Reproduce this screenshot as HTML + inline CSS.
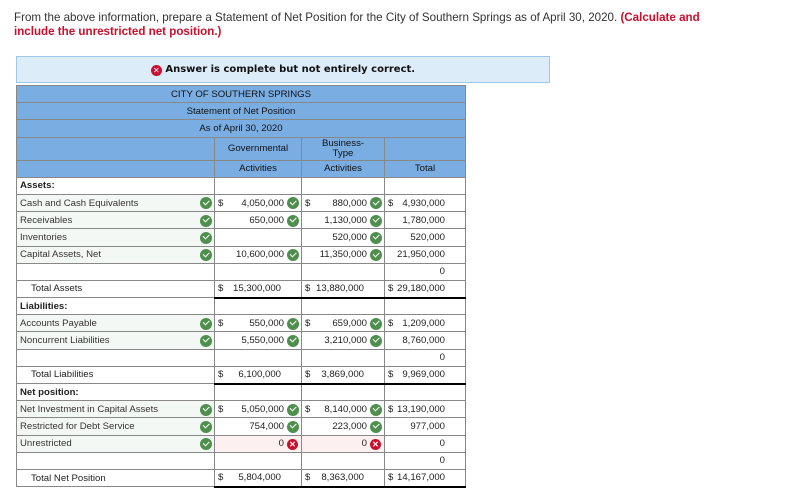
<!DOCTYPE html>
<html><head><meta charset="utf-8"><style>
*{margin:0;padding:0;box-sizing:border-box}
body{width:811px;height:504px;background:#fff;font-family:"Liberation Sans",Arial,sans-serif;position:relative;overflow:hidden;color:#222}
.q{position:absolute;left:14px;top:11px;font-size:11.6px;line-height:14px;color:#333;white-space:nowrap}
.q b{color:#c8102e}
.ban{position:absolute;left:16px;top:56px;width:534px;height:27px;background:#dcecf9;border:1px solid #9ec7ea;font-size:10px;font-weight:bold;text-align:center;line-height:25px;font-family:"DejaVu Sans",sans-serif;color:#111}
.x{display:inline-block;width:11px;height:11px;border-radius:50%;background:#c8102e;color:#fff;font-size:8px;line-height:11px;text-align:center;vertical-align:-1px;font-weight:bold}
table{position:absolute;left:16px;top:85px;border-collapse:collapse;font-size:9.6px;table-layout:fixed}
td{border:1px solid #888;height:17.2px;padding:0 3px;position:relative;white-space:nowrap}
.h td{background:#7aaee3;text-align:center;color:#111;font-size:9.6px}
.l{background:#f4f8f4;color:#333}
.lb{background:#fff;font-weight:bold;color:#222}
.n{text-align:right;padding-right:17px}
.t{text-align:right;padding-right:20px}
.c{display:inline-block;width:12px;height:12px;border-radius:50%;background:#4e8f4e;position:absolute;top:2.5px}
.c::after{content:"";position:absolute;left:3px;top:2.5px;width:5px;height:2.5px;border-left:1.8px solid #fff;border-bottom:1.8px solid #fff;transform:rotate(-45deg)}
.ck{right:2px}
.xr{position:absolute;right:3px;top:3px}
.d{position:absolute;left:3px}
.tot td.v{border-top:1px solid #000;border-bottom:2px solid #000}
.pk{background:#fdf0f0}
</style></head><body>
<div class="q">From the above information, prepare a Statement of Net Position for the City of Southern Springs as of April 30, 2020. <b>(Calculate and<br>include the unrestricted net position.)</b></div>
<div class="ban"><span class="x">✕</span> Answer is complete but not entirely correct.</div>
<table>
<colgroup><col style="width:198px"><col style="width:87px"><col style="width:83px"><col style="width:81px"></colgroup>
<tr class="h"><td colspan="4">CITY OF SOUTHERN SPRINGS</td></tr>
<tr class="h"><td colspan="4">Statement of Net Position</td></tr>
<tr class="h"><td colspan="4">As of April 30, 2020</td></tr>
<tr class="h"><td style="height:23px"></td><td>Governmental</td><td style="line-height:10px">Business-<br>Type</td><td></td></tr>
<tr class="h"><td></td><td>Activities</td><td>Activities</td><td>Total</td></tr>
<tr><td class="lb">Assets:</td><td></td><td></td><td></td></tr>
<tr><td class="l">Cash and Cash Equivalents<i class="c ck"></i></td><td class="n"><span class="d">$</span>4,050,000<i class="c ck"></i></td><td class="n"><span class="d">$</span>880,000<i class="c ck"></i></td><td class="t"><span class="d">$</span>4,930,000</td></tr>
<tr><td class="l">Receivables<i class="c ck"></i></td><td class="n">650,000<i class="c ck"></i></td><td class="n">1,130,000<i class="c ck"></i></td><td class="t">1,780,000</td></tr>
<tr><td class="l">Inventories<i class="c ck"></i></td><td></td><td class="n">520,000<i class="c ck"></i></td><td class="t">520,000</td></tr>
<tr><td class="l">Capital Assets, Net<i class="c ck"></i></td><td class="n">10,600,000<i class="c ck"></i></td><td class="n">11,350,000<i class="c ck"></i></td><td class="t">21,950,000</td></tr>
<tr><td></td><td></td><td></td><td class="t">0</td></tr>
<tr class="tot"><td style="padding-left:14px">Total Assets</td><td class="v t"><span class="d">$</span>15,300,000</td><td class="v t"><span class="d">$</span>13,880,000</td><td class="v t"><span class="d">$</span>29,180,000</td></tr>
<tr><td class="lb">Liabilities:</td><td></td><td></td><td></td></tr>
<tr><td class="l">Accounts Payable<i class="c ck"></i></td><td class="n"><span class="d">$</span>550,000<i class="c ck"></i></td><td class="n"><span class="d">$</span>659,000<i class="c ck"></i></td><td class="t"><span class="d">$</span>1,209,000</td></tr>
<tr><td class="l">Noncurrent Liabilities<i class="c ck"></i></td><td class="n">5,550,000<i class="c ck"></i></td><td class="n">3,210,000<i class="c ck"></i></td><td class="t">8,760,000</td></tr>
<tr><td></td><td></td><td></td><td class="t">0</td></tr>
<tr class="tot"><td style="padding-left:14px">Total Liabilities</td><td class="v t"><span class="d">$</span>6,100,000</td><td class="v t"><span class="d">$</span>3,869,000</td><td class="v t"><span class="d">$</span>9,969,000</td></tr>
<tr><td class="lb">Net position:</td><td></td><td></td><td></td></tr>
<tr><td class="l">Net Investment in Capital Assets<i class="c ck"></i></td><td class="n"><span class="d">$</span>5,050,000<i class="c ck"></i></td><td class="n"><span class="d">$</span>8,140,000<i class="c ck"></i></td><td class="t"><span class="d">$</span>13,190,000</td></tr>
<tr><td class="l">Restricted for Debt Service<i class="c ck"></i></td><td class="n">754,000<i class="c ck"></i></td><td class="n">223,000<i class="c ck"></i></td><td class="t">977,000</td></tr>
<tr><td class="l">Unrestricted<i class="c ck"></i></td><td class="n pk">0<span class="x xr">✕</span></td><td class="n pk">0<span class="x xr">✕</span></td><td class="t">0</td></tr>
<tr><td></td><td></td><td></td><td class="t">0</td></tr>
<tr class="tot"><td style="padding-left:14px">Total Net Position</td><td class="v t"><span class="d">$</span>5,804,000</td><td class="v t"><span class="d">$</span>8,363,000</td><td class="v t"><span class="d">$</span>14,167,000</td></tr>
</table>
</body></html>
